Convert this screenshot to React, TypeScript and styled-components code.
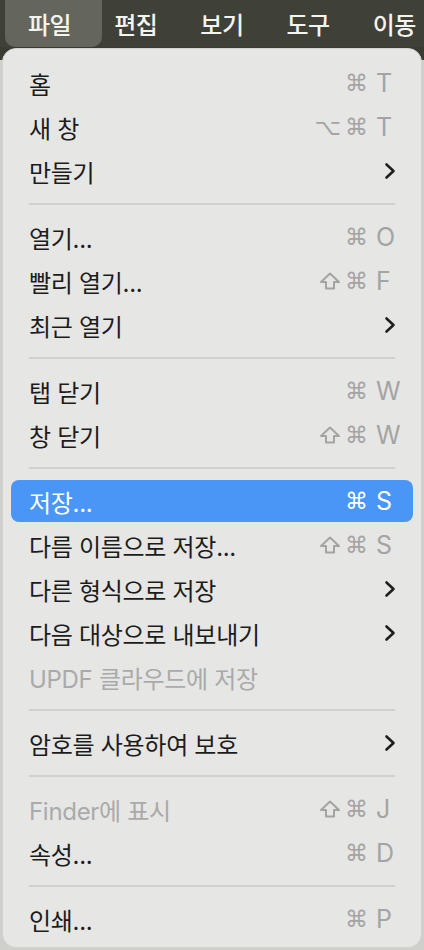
import React from "react";
import styled, { createGlobalStyle } from "styled-components";

const GlobalStyle = createGlobalStyle`
  body {
    margin: 0;
    background-color: #cfcfcc;
    font-family: "Inter", "Noto Sans CJK KR", sans-serif;
  }
`;

const Page = styled.div`
  width: 424px;
  height: 950px;
  overflow: hidden;
  background: linear-gradient(#3a3b33 0, #3a3b33 60px, #cfcfcc 60px);
`;

const MenuBar = styled.div`
  height: 47px;
  display: flex;
  align-items: stretch;
  padding-left: 5px;
  background-color: #3f4038;
`;

const BarItem = styled.div<{ $active?: boolean }>`
  display: flex;
  align-items: center;
  padding: 0 ${(p) => (p.$active ? 31 : 20)}px 0 23px;
  margin-right: ${(p) => (p.$active ? -11 : 0)}px;
  font-family: "Noto Sans CJK KR", sans-serif;
  font-size: 24px;
  font-weight: 500;
  color: #f4f4f0;
  background-color: ${(p) => (p.$active ? "#64665e" : "transparent")};
  border-radius: 0 0 10px 10px;
  letter-spacing: -0.5px;
  white-space: nowrap;
`;

const Panel = styled.div`
  margin: 1px 2px 0;
  height: 900px;
  box-sizing: border-box;
  padding: 12px 0 8px;
  display: flex;
  flex-direction: column;
  background-color: #e6e6e4;
  border: 1px solid #d2d2d0;
  border-radius: 14px;
`;

const Row = styled.div<{ $selected?: boolean; $disabled?: boolean }>`
  flex: none;
  height: 42px;
  margin: 1px 8px;
  padding: 0 15px 0 18px;
  display: flex;
  align-items: center;
  border-radius: 8px;
  background-color: ${(p) => (p.$selected ? "#4a96f7" : "transparent")};
  color: ${(p) =>
    p.$selected ? "#ffffff" : p.$disabled ? "#aaaaaa" : "#1c1c1c"};
`;

const Label = styled.div`
  flex: 1;
  font-size: 24px;
  letter-spacing: -0.3px;
  white-space: nowrap;
`;

const Shortcut = styled.div<{ $selected?: boolean }>`
  display: flex;
  align-items: center;
  gap: 4px;
  color: ${(p) => (p.$selected ? "#ffffff" : "#a4a4a4")};
`;

const Glyph = styled.span`
  font-family: "DejaVu Sans", sans-serif;
  font-size: 23px;
  line-height: 1;
`;

const ShiftIcon = styled.svg`
  width: 22px;
  height: 18px;
`;

const Key = styled.span`
  width: 22px;
  margin-left: 4px;
  font-size: 25px;
  font-family: "Inter", sans-serif;
`;

const Chevron = styled.svg`
  width: 12px;
  height: 18px;
  margin-right: 2px;
`;

const Separator = styled.div`
  flex: none;
  height: 22px;
  display: flex;
  align-items: center;
  padding: 0 26px;

  &::after {
    content: "";
    flex: 1;
    height: 2px;
    background-color: #d0d0ce;
  }
`;

type Item =
  | { sep: true }
  | {
      sep?: false;
      label: string;
      mods?: string[];
      keyName?: string;
      sub?: boolean;
      selected?: boolean;
      disabled?: boolean;
    };

const items: Item[] = [
  { label: "홈", mods: ["cmd"], keyName: "T" },
  { label: "새 창", mods: ["opt", "cmd"], keyName: "T" },
  { label: "만들기", sub: true },
  { sep: true },
  { label: "열기...", mods: ["cmd"], keyName: "O" },
  { label: "빨리 열기...", mods: ["shift", "cmd"], keyName: "F" },
  { label: "최근 열기", sub: true },
  { sep: true },
  { label: "탭 닫기", mods: ["cmd"], keyName: "W" },
  { label: "창 닫기", mods: ["shift", "cmd"], keyName: "W" },
  { sep: true },
  { label: "저장...", mods: ["cmd"], keyName: "S", selected: true },
  { label: "다름 이름으로 저장...", mods: ["shift", "cmd"], keyName: "S" },
  { label: "다른 형식으로 저장", sub: true },
  { label: "다음 대상으로 내보내기", sub: true },
  { label: "UPDF 클라우드에 저장", disabled: true },
  { sep: true },
  { label: "암호를 사용하여 보호", sub: true },
  { sep: true },
  { label: "Finder에 표시", mods: ["shift", "cmd"], keyName: "J", disabled: true },
  { label: "속성...", mods: ["cmd"], keyName: "D" },
  { sep: true },
  { label: "인쇄...", mods: ["cmd"], keyName: "P" },
];

const menus = ["파일", "편집", "보기", "도구", "이동"];

const Modifier: React.FC<{ name: string }> = ({ name }) => {
  if (name === "shift") {
    return (
      <ShiftIcon viewBox="0 0 22 18">
        <path
          d="M11 1.5 L20 10 H15 V16.5 H7 V10 H2 Z"
          fill="none"
          stroke="currentColor"
          strokeWidth="2"
          strokeLinejoin="round"
        />
      </ShiftIcon>
    );
  }
  return <Glyph>{name === "opt" ? "⌥" : "⌘"}</Glyph>;
};

const App: React.FC = () => {
  return (
    <Page>
      <GlobalStyle />
      <MenuBar>
        {menus.map((m, i) => (
          <BarItem key={m} $active={i === 0}>
            {m}
          </BarItem>
        ))}
      </MenuBar>
      <Panel>
        {items.map((item, i) =>
          item.sep ? (
            <Separator key={i} />
          ) : (
            <Row key={i} $selected={item.selected} $disabled={item.disabled}>
              <Label>{item.label}</Label>
              {item.keyName && (
                <Shortcut $selected={item.selected}>
                  {item.mods?.map((m) => (
                    <Modifier key={m} name={m} />
                  ))}
                  <Key>{item.keyName}</Key>
                </Shortcut>
              )}
              {item.sub && (
                <Chevron viewBox="0 0 12 18">
                  <path
                    d="M2.5 2.5 L9.5 9 L2.5 15.5"
                    fill="none"
                    stroke="#1f1f1f"
                    strokeWidth="2.6"
                    strokeLinecap="round"
                    strokeLinejoin="round"
                  />
                </Chevron>
              )}
            </Row>
          )
        )}
      </Panel>
    </Page>
  );
};

export default App;
